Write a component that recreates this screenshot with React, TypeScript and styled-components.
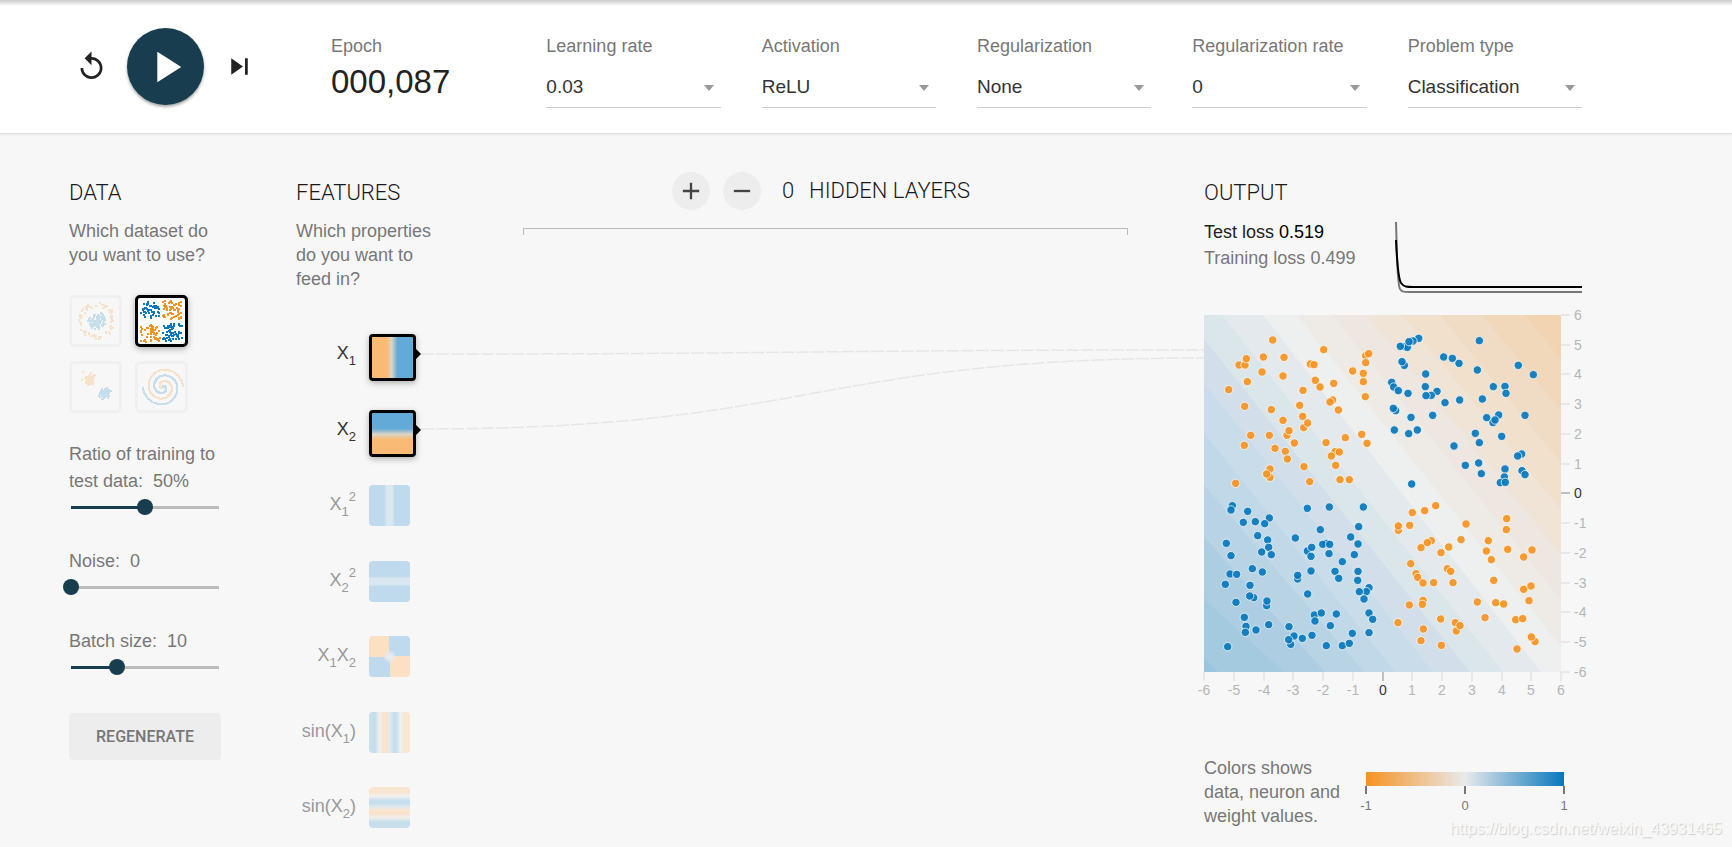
import React, { useState } from "react";
import styled, { createGlobalStyle, css } from "styled-components";

const ORANGE = "#f59322";
const BLUE = "#0877bd";
const DARK = "#183d4e";

const GlobalStyle = createGlobalStyle`
  *, *::before, *::after { box-sizing: border-box; }
  body {
    margin: 0;
    background: #f7f7f7;
    color: #777;
    font-family: "Liberation Sans", Arial, Helvetica, sans-serif;
    font-size: 18px;
    line-height: 24px;
  }
  button, select, input { font: inherit; margin: 0; }
`;

const Page = styled.div`
  position: relative;
  min-height: 100vh;
`;

/* ---------- top bar ---------- */

const TopBar = styled.header`
  display: flex;
  align-items: flex-start;
  padding: 28px 150px 25px 69px;
  border-bottom: 1px solid #dcdcdc;
  background: #fff linear-gradient(#c9c9c9, #fff) 0 0 / 100% 6px no-repeat;
  box-shadow: 0 1px 3px rgba(0, 0, 0, 0.06);
`;

const Controls = styled.div`
  display: flex;
  flex: none;
  align-items: center;
  gap: 19px;
  width: 262px;
  padding-left: 6px;
`;

const IconButton = styled.button`
  display: flex;
  width: 33px;
  height: 33px;
  padding: 0;
  border: 0;
  background: none;
  color: #222;
  cursor: pointer;
`;

const PlayButton = styled.button`
  display: flex;
  align-items: center;
  justify-content: center;
  width: 77px;
  height: 77px;
  padding: 0;
  border: 0;
  border-radius: 50%;
  background: ${DARK};
  color: #fff;
  box-shadow: 0 2px 3px rgba(0, 0, 0, 0.35);
  cursor: pointer;
`;

const Settings = styled.div`
  display: grid;
  flex: 1;
  grid-template-columns: repeat(6, minmax(0, 1fr));
  gap: 41px;
  padding-top: 6px;
`;

const Field = styled.div`
  display: flex;
  flex-direction: column;
  white-space: nowrap;
`;

const EpochValue = styled.output`
  margin-top: 5px;
  color: #222;
  font-size: 33px;
  line-height: 38px;
`;

const SelectBox = styled.div`
  position: relative;
  margin-top: 12px;

  &::after {
    content: "";
    position: absolute;
    top: 15px;
    right: 7px;
    border: 5px solid transparent;
    border-top: 6px solid #999;
    border-bottom: 0;
    pointer-events: none;
  }
`;

const Select = styled.select`
  display: block;
  width: 100%;
  height: 38px;
  padding: 0 20px 4px 0;
  border: 0;
  border-bottom: 1px solid #ccc;
  border-radius: 0;
  background: none;
  color: #333;
  font-size: 19px;
  appearance: none;
`;

/* ---------- page body ---------- */

const Main = styled.main`
  display: grid;
  grid-template-columns: 152px 140px minmax(0, 1fr) 378px;
  padding: 37px 150px 0 69px;
`;

const Column = styled.section<{ $indent?: boolean }>`
  margin-left: ${(p) => (p.$indent ? "75px" : "0")};
`;

const Title = styled.h2`
  margin: 9px 0 13px;
  color: #1a1a1a;
  font: 300 22px/26px Roboto, sans-serif;
`;

const Text = styled.p`
  margin: 0;
`;

const Datasets = styled.div`
  display: grid;
  grid-template-columns: 53px 53px;
  gap: 14px 13px;
  margin: 28px 0;
`;

const DatasetButton = styled.button<{ $active: boolean }>`
  height: 52px;
  padding: 0;
  border: 3px solid #d9d9d9;
  border-radius: 5px;
  background: #f7f7f7;
  opacity: 0.2;
  cursor: pointer;
  ${(p) =>
    p.$active &&
    css`
      border-color: #000;
      background: #fff;
      opacity: 1;
      box-shadow: 0 2px 6px rgba(0, 0, 0, 0.3);
    `}

  svg {
    display: block;
    width: 100%;
    height: 46px;
  }
`;

const SliderField = styled.div`
  margin-bottom: 33px;
  line-height: 27px;

  label { display: block; }
  output { margin-left: 5px; }
`;

const Slider = styled.input<{ $fill: number }>`
  display: block;
  width: calc(100% + 12px);
  height: 16px;
  margin: 4px 0 0 -6px;
  background: none;
  appearance: none;

  &::-webkit-slider-runnable-track {
    height: 16px;
    background: linear-gradient(
        to right,
        ${DARK} ${(p) => p.$fill}%,
        #bbb ${(p) => p.$fill}%
      )
      center / calc(100% - 16px) 3px no-repeat;
  }
  &::-webkit-slider-thumb {
    width: 16px;
    height: 16px;
    border: 0;
    border-radius: 50%;
    background: ${DARK};
    appearance: none;
  }
`;

const Regenerate = styled.button`
  width: 100%;
  height: 47px;
  margin-top: 5px;
  padding: 0;
  border: 0;
  border-radius: 4px;
  background: #ededed;
  color: #777;
  font: 500 16px/24px Roboto, sans-serif;
  cursor: pointer;
`;

/* ---------- features ---------- */

const FeatureColumn = styled(Column)`
  width: 140px;
`;

const FeatureList = styled.ul`
  display: flex;
  flex-direction: column;
  justify-content: space-between;
  height: 495px;
  margin: 43px 0 0;
  padding: 0;
  list-style: none;
`;

const Feature = styled.li<{ $active: boolean }>`
  display: grid;
  grid-template-columns: 60px auto;
  gap: 13px;
  height: 42px;
  color: ${(p) => (p.$active ? "#333" : "#999")};
`;

const FeatureName = styled.label`
  padding-top: 7px;
  text-align: right;
  white-space: nowrap;

  sub, sup {
    font-size: 13px;
    line-height: 0;
    vertical-align: -6px;
  }
  sup { vertical-align: 9px; }
`;

const FeatureButton = styled.button<{ $active: boolean; $paint: string }>`
  position: relative;
  width: 41px;
  height: 41px;
  padding: 0;
  border: 0;
  border-radius: 4px;
  background: ${(p) => p.$paint};
  cursor: pointer;
  ${(p) =>
    p.$active &&
    css`
      width: 47px;
      height: 47px;
      border: 3px solid #000;
      background-origin: padding-box;
      box-shadow: 0 2px 6px rgba(0, 0, 0, 0.3);

      &::after {
        content: "";
        position: absolute;
        top: 12px;
        left: 44px;
        border: 5px solid transparent;
        border-left-color: #000;
        border-right: 0;
      }
    `}
`;

/* ---------- network ---------- */

const Network = styled.section`
  margin-left: 75px;
`;

const LayerControls = styled.div`
  display: flex;
  align-items: center;
  justify-content: center;
  gap: 13px;
  height: 39px;
  margin: 0 76px 18px 87px;
  padding-right: 9px;
  color: #1a1a1a;
  font: 300 22px/26px Roboto, sans-serif;
  white-space: nowrap;
`;

const RoundButton = styled.button`
  display: flex;
  align-items: center;
  justify-content: center;
  width: 38px;
  height: 38px;
  padding: 0;
  border: 0;
  border-radius: 50%;
  background: #ededed;
  color: #444;
  cursor: pointer;
`;

const LayerCount = styled.span`
  margin: 0 2px 0 8px;
`;

const Bracket = styled.div`
  height: 7px;
  margin: 0 76px 0 87px;
  border: 1px solid #bbb;
  border-bottom: 0;
`;

const Links = styled.svg`
  display: block;
  width: calc(100% + 15px);
  height: 100px;
  margin: 105px 0 0 -15px;
  fill: none;
  stroke: #e6e6e4;

  path {
    stroke-width: 1.5px;
    stroke-dasharray: 13 2;
    vector-effect: non-scaling-stroke;
  }
`;

/* ---------- output ---------- */

const Metrics = styled.div`
  display: flex;
  justify-content: space-between;
  height: 96px;
  line-height: 26px;
`;

const TestLoss = styled.div`
  color: #222;

  output { color: #000; }
`;

const LossChart = styled.svg`
  width: 187px;
  height: 72px;
  margin-top: 3px;
  fill: none;
  stroke-width: 2;
`;

const HeatMap = styled.svg`
  display: block;
  width: 378px;
  height: 390px;
  overflow: visible;
  font-size: 14px;
`;

const Legend = styled.div`
  display: flex;
  gap: 22px;
  margin-top: 51px;
`;

const LegendText = styled.p`
  width: 140px;
  margin: 0;
`;

const Scale = styled.div`
  width: 198px;
  margin-top: 16px;
`;

const ScaleBar = styled.div`
  height: 14px;
  background: linear-gradient(to right, ${ORANGE}, #e8eaeb, ${BLUE});
`;

const ScaleTicks = styled.div`
  display: flex;
  justify-content: space-between;
  margin: 0 -10px;
`;

const ScaleTick = styled.span`
  display: flex;
  flex-direction: column;
  align-items: center;
  width: 20px;
  font-size: 13px;
  line-height: 24px;

  &::before {
    content: "";
    width: 2px;
    height: 8px;
    background: #777;
  }
`;

const Watermark = styled.div`
  position: absolute;
  right: 10px;
  bottom: 6px;
  color: #f9f9f9;
  font-size: 16px;
  text-shadow: 1px 1px 1px #ccc;
`;

/* ---------- data ---------- */

type Point = [number, number];
type Cloud = { color: string; points: Point[] };

const makeRandom = (seed: number) => () => {
  seed = (seed * 16807) % 2147483647;
  return seed / 2147483647;
};

const times = (n: number, make: (i: number) => Point): Point[] =>
  Array.from({ length: n }, (_, i) => make(i));

const ringCloud = (seed: number, n: number, from: number, to: number) => {
  const random = makeRandom(seed);
  return times(n, () => {
    const angle = random() * Math.PI * 2;
    const radius = from + random() * (to - from);
    return [24 + radius * Math.cos(angle), 22 + radius * Math.sin(angle)];
  });
};

const boxCloud = (seed: number, n: number, x: number, y: number) => {
  const random = makeRandom(seed);
  return times(n, () => [x + random() * 19, y + random() * 18]);
};

const gaussCloud = (seed: number, n: number, x: number, y: number) => {
  const random = makeRandom(seed);
  const spread = () => (random() + random() + random() - 1.5) * 5;
  return times(n, () => [x + spread(), y + spread()]);
};

const spiralCloud = (turn: number) =>
  times(150, (i) => {
    const t = i / 150;
    const angle = turn - Math.PI * 3.5 * (1 - t);
    const radius = 20 * t;
    return [24 + radius * Math.cos(angle), 22 + radius * Math.sin(angle)];
  });

const DATASETS: { name: string; clouds: Cloud[] }[] = [
  {
    name: "Circle",
    clouds: [
      { color: ORANGE, points: ringCloud(71, 85, 14, 19) },
      { color: BLUE, points: ringCloud(19, 110, 0, 9) },
    ],
  },
  {
    name: "Exclusive or",
    clouds: [
      { color: BLUE, points: [...boxCloud(5, 44, 2, 2), ...boxCloud(911, 60, 24, 25)] },
      { color: ORANGE, points: [...boxCloud(303, 60, 24, 2), ...boxCloud(47, 50, 2, 25)] },
    ],
  },
  {
    name: "Gaussian",
    clouds: [
      { color: ORANGE, points: gaussCloud(11, 100, 16, 14) },
      { color: BLUE, points: gaussCloud(83, 100, 31, 29) },
    ],
  },
  {
    name: "Spiral",
    clouds: [
      { color: ORANGE, points: spiralCloud(0) },
      { color: BLUE, points: spiralCloud(Math.PI) },
    ],
  },
];

const SETTINGS = [
  { label: "Learning rate", options: ["0.03", "0.1", "0.3", "1"] },
  { label: "Activation", options: ["ReLU", "Tanh", "Sigmoid", "Linear"] },
  { label: "Regularization", options: ["None", "L1", "L2"] },
  { label: "Regularization rate", options: ["0", "0.001", "0.01", "0.1"] },
  { label: "Problem type", options: ["Classification", "Regression"] },
];

const SLIDERS = [
  { id: "ratio", label: "Ratio of training to test data:", min: 10, max: 90, value: 50, unit: "%" },
  { id: "noise", label: "Noise:", min: 0, max: 50, value: 0, unit: "" },
  { id: "batch", label: "Batch size:", min: 1, max: 30, value: 10, unit: "" },
];

const STEP = "#f8ba75 36%, #ddd6c6 48%, #63aad8 62%";
const BAND = "#bfdaec 37%, #d8e7f0 43%, #d8e7f0 57%, #bfdaec 63%";
const WAVE =
  "#c9dfec 0, #c5deec 15%, #f1efec 25%, #fae2c8 36%, #f7e6d3 44%, #dfe9ee 52%, #c1ddec 62%, #c9e0ec 68%, #f1f1f0 77%, #f9e6d0 87%";

const FEATURES = [
  { id: "x", name: <>X<sub>1</sub></>, active: true, paint: `linear-gradient(to right, ${STEP})` },
  { id: "y", name: <>X<sub>2</sub></>, active: true, paint: `linear-gradient(to top, ${STEP})` },
  { id: "x2", name: <>X<sub>1</sub><sup>2</sup></>, active: false, paint: `linear-gradient(to right, ${BAND})` },
  { id: "y2", name: <>X<sub>2</sub><sup>2</sup></>, active: false, paint: `linear-gradient(to top, ${BAND})` },
  {
    id: "xy",
    name: <>X<sub>1</sub>X<sub>2</sub></>,
    active: false,
    paint:
      "radial-gradient(circle, #e6ebee 2px, transparent 7px), conic-gradient(#bfdaec 25%, #fbe0c3 0 50%, #bfdaec 0 75%, #fbe0c3 0)",
  },
  { id: "sinx", name: <>sin(X<sub>1</sub>)</>, active: false, paint: `linear-gradient(to right, ${WAVE})` },
  { id: "siny", name: <>sin(X<sub>2</sub>)</>, active: false, paint: `linear-gradient(to top, ${WAVE})` },
];

/* Bands of the decision surface: each covers what lies above and right of its edge. */
const BANDS: { color: string; from: Point; to: Point }[] = [
  { color: "#a4cae0", from: [0, 343], to: [14, 357] },
  { color: "#adcee2", from: [0, 284], to: [80, 357] },
  { color: "#b7d3e4", from: [0, 222], to: [121, 357] },
  { color: "#c0d8e7", from: [0, 170], to: [160, 357] },
  { color: "#c9dce9", from: [0, 118], to: [191, 357] },
  { color: "#d2dfea", from: [0, 68], to: [229, 357] },
  { color: "#dbe6eb", from: [0, 24], to: [266, 357] },
  { color: "#e4e9ed", from: [18, 0], to: [299, 357] },
  { color: "#edf0ef", from: [59, 0], to: [337, 357] },
  { color: "#eeebe7", from: [93, 0], to: [357, 332] },
  { color: "#eee6e1", from: [128, 0], to: [357, 285] },
  { color: "#f0e4d7", from: [163, 0], to: [357, 240] },
  { color: "#f0e0cc", from: [198, 0], to: [357, 195] },
  { color: "#f0dcc4", from: [236, 0], to: [357, 148] },
  { color: "#f1d8bb", from: [278, 0], to: [357, 96] },
  { color: "#f2d4b3", from: [321, 0], to: [357, 44] },
];

/* Sample points per quadrant, in thirds of a pixel. */
const QUADRANTS: { color: string; x: number; y: number; points: Point[] }[] = [
  {
    color: ORANGE, x: -27, y: -30,
    points: [
      [233, 105], [386, 134], [205, 156], [267, 157], [132, 180], [150, 180], [154, 161], [201, 201], [264, 213],
      [157, 230], [101, 254], [346, 177], [357, 179], [361, 226], [375, 246], [416, 235], [324, 256], [512, 152],
      [521, 146], [512, 173], [473, 198], [505, 205], [505, 230], [511, 275], [149, 304], [229, 314], [314, 301],
      [413, 285], [405, 291], [430, 315], [323, 334], [264, 346], [326, 368], [338, 354], [276, 391], [282, 377],
      [167, 391], [223, 391], [148, 421], [240, 430], [298, 414], [271, 439], [277, 462], [393, 413], [451, 398],
      [500, 388], [516, 415], [420, 440], [433, 441], [409, 453], [422, 481], [327, 485], [225, 492], [225, 517],
      [215, 507], [122, 535], [344, 530], [435, 524], [463, 524],
    ],
  },
  {
    color: BLUE, x: 513, y: -30,
    points: [
      [131, 100], [114, 108], [90, 125], [97, 127], [102, 110], [76, 124], [313, 107], [88, 181], [81, 170],
      [206, 156], [232, 160], [252, 175], [152, 207], [307, 195], [430, 181], [475, 209], [50, 232], [56, 246],
      [70, 257], [99, 265], [151, 245], [186, 259], [169, 271], [153, 272], [210, 293], [254, 285], [322, 282],
      [355, 245], [390, 244], [393, 265], [62, 317], [55, 310], [108, 337], [173, 331], [335, 338], [371, 330],
      [354, 353], [360, 345], [450, 331], [58, 375], [101, 386], [127, 375], [301, 385], [380, 394], [313, 413],
      [237, 423], [440, 447], [428, 453], [271, 481], [311, 474], [319, 506], [390, 492], [441, 497], [450, 509],
      [388, 516], [376, 533], [391, 532], [110, 537],
    ],
  },
  {
    color: BLUE, x: -27, y: 525,
    points: [
      [112, 47], [108, 60], [158, 64], [337, 55], [403, 51], [505, 51], [145, 97], [181, 95], [223, 84], [209, 101],
      [491, 110], [376, 119], [188, 137], [218, 150], [301, 144], [467, 141], [94, 160], [221, 172], [200, 186],
      [229, 194], [108, 197], [393, 160], [383, 163], [404, 163], [489, 162], [337, 183], [350, 172], [348, 199],
      [402, 191], [478, 194], [442, 215], [172, 236], [202, 246], [105, 252], [125, 253], [348, 243], [420, 244],
      [489, 244], [431, 265], [488, 271], [308, 267], [308, 256], [91, 283], [165, 286], [522, 293], [514, 305],
      [493, 305], [338, 312], [507, 327], [176, 323], [164, 318], [123, 337], [215, 347], [216, 333], [148, 382],
      [153, 409], [151, 427], [183, 420], [221, 404], [358, 375], [379, 369], [424, 372], [360, 393], [406, 407],
      [522, 369], [533, 388], [282, 410], [522, 428], [472, 430], [351, 436], [322, 445], [297, 438], [287, 463],
      [281, 449], [98, 470], [394, 467], [442, 467], [463, 460],
    ],
  },
  {
    color: ORANGE, x: 513, y: 525,
    points: [
      [182, 47], [149, 62], [112, 68], [70, 121], [70, 108], [104, 106], [273, 102], [395, 86], [394, 119],
      [340, 152], [258, 149], [169, 152], [157, 158], [138, 173], [221, 171], [198, 188], [334, 183], [398, 178],
      [471, 180], [446, 201], [349, 209], [107, 221], [217, 236], [227, 244], [123, 251], [128, 262], [144, 279],
      [176, 278], [234, 278], [356, 271], [446, 298], [468, 288], [144, 331], [142, 343], [103, 345], [307, 336],
      [362, 338], [386, 342], [462, 332], [330, 383], [422, 389], [443, 386], [69, 398], [145, 417], [197, 387],
      [241, 398], [244, 423], [255, 407], [138, 452], [199, 466], [426, 477], [480, 455], [469, 441],
    ],
  },
];

const AXIS = Array.from({ length: 13 }, (_, i) => i - 6);
const axisPosition = (value: number) => Math.round(((value + 6) * 357) / 12);

/* ---------- parts ---------- */

const Icon = ({ d, size }: { d: string; size: number }) => (
  <svg width={size} height={size} viewBox="0 0 24 24" fill="currentColor" aria-hidden="true">
    <path d={d} />
  </svg>
);

const DatasetThumb = ({ clouds }: { clouds: Cloud[] }) => (
  <svg viewBox="0 0 47 46" aria-hidden="true">
    {clouds.map((cloud) => (
      <path
        key={cloud.color}
        fill={cloud.color}
        shapeRendering="crispEdges"
        d={cloud.points.map(([x, y]) => `M${Math.round(x)} ${Math.round(y)}h2v2h-2z`).join("")}
      />
    ))}
  </svg>
);

const SliderRow = ({ id, label, min, max, value, unit }: (typeof SLIDERS)[number]) => {
  const [current, setCurrent] = useState(value);
  return (
    <SliderField>
      <label htmlFor={id}>
        {label} <output>{`${current}${unit}`}</output>
      </label>
      <Slider
        id={id}
        type="range"
        min={min}
        max={max}
        value={current}
        $fill={((current - min) / (max - min)) * 100}
        onChange={(e) => setCurrent(Number(e.target.value))}
      />
    </SliderField>
  );
};

const DecisionSurface = () => (
  <HeatMap viewBox="0 0 378 390" role="img" aria-label="Decision surface">
    <rect width="357" height="357" fill="#99c5de" />
    {BANDS.map(({ color, from, to }) => (
      <path
        key={color}
        fill={color}
        d={`M${from} L${to} ${to[0] < 357 ? "L357 357" : ""} L357 0 ${from[0] > 0 ? "" : "L0 0"}z`}
      />
    ))}
    {QUADRANTS.map(({ color, x, y, points }) => (
      <g
        key={`${x},${y}`}
        transform={`scale(${1 / 3}) translate(${x} ${y})`}
        fill={color}
        fillOpacity="0.92"
        stroke="#fff"
        strokeOpacity="0.75"
        strokeWidth="3"
      >
        {points.map(([cx, cy]) => (
          <circle key={`${cx},${cy}`} cx={cx} cy={cy} r="12.5" />
        ))}
      </g>
    ))}
    {AXIS.map((value) => {
      const at = axisPosition(value);
      const line = value === 0 ? "#888" : "#d9d9d9";
      const text = value === 0 ? "#333" : "#b5b5b5";
      return (
        <g key={value}>
          <path d={`M${at} 357v9M357 ${357 - at}h9`} stroke={line} />
          <text x={at} y="380" textAnchor="middle" fill={text}>{value}</text>
          <text x="370" y={362 - at} fill={text}>{value}</text>
        </g>
      );
    })}
  </HeatMap>
);

export default function App() {
  const [dataset, setDataset] = useState("Exclusive or");

  return (
    <Page>
      <GlobalStyle />
      <TopBar>
        <Controls>
          <IconButton aria-label="Reset">
            <Icon
              size={33}
              d="M12 5V1L7 6l5 5V7c3.31 0 6 2.69 6 6s-2.69 6-6 6-6-2.69-6-6H4c0 4.42 3.58 8 8 8s8-3.58 8-8-3.58-8-8-8z"
            />
          </IconButton>
          <PlayButton aria-label="Run">
            <Icon size={52} d="M8 5v14l11-7z" />
          </PlayButton>
          <IconButton aria-label="Step">
            <Icon size={33} d="M6 18l8.500-6L6 6v12zM16 6v12h2V6h-2z" />
          </IconButton>
        </Controls>
        <Settings>
          <Field>
            <label htmlFor="epoch">Epoch</label>
            <EpochValue id="epoch">000,087</EpochValue>
          </Field>
          {SETTINGS.map(({ label, options }) => (
            <Field key={label}>
              <label htmlFor={label}>{label}</label>
              <SelectBox>
                <Select id={label}>
                  {options.map((option) => (
                    <option key={option}>{option}</option>
                  ))}
                </Select>
              </SelectBox>
            </Field>
          ))}
        </Settings>
      </TopBar>

      <Main>
        <Column>
          <Title>DATA</Title>
          <Text>Which dataset do you want to use?</Text>
          <Datasets>
            {DATASETS.map(({ name, clouds }) => (
              <DatasetButton
                key={name}
                aria-label={name}
                $active={name === dataset}
                onClick={() => setDataset(name)}
              >
                <DatasetThumb clouds={clouds} />
              </DatasetButton>
            ))}
          </Datasets>
          {SLIDERS.map((slider) => (
            <SliderRow key={slider.id} {...slider} />
          ))}
          <Regenerate>REGENERATE</Regenerate>
        </Column>

        <FeatureColumn $indent>
          <Title>FEATURES</Title>
          <Text>Which properties do you want to feed in?</Text>
          <FeatureList>
            {FEATURES.map(({ id, name, active, paint }) => (
              <Feature key={id} $active={active}>
                <FeatureName htmlFor={id}>{name}</FeatureName>
                <FeatureButton id={id} $active={active} $paint={paint} />
              </Feature>
            ))}
          </FeatureList>
        </FeatureColumn>

        <Network>
          <LayerControls>
            <RoundButton aria-label="Add layer">
              <Icon size={28} d="M19 13h-6v6h-2v-6H5v-2h6V5h2v6h6v2z" />
            </RoundButton>
            <RoundButton aria-label="Remove layer">
              <Icon size={28} d="M19 13H5v-2h14v2z" />
            </RoundButton>
            <LayerCount>0</LayerCount>
            <span>HIDDEN LAYERS</span>
          </LayerControls>
          <Bracket />
          <Links viewBox="0 0 783 100" preserveAspectRatio="none" aria-hidden="true">
            <path d="M0 14C391 14 391 10 783 10" />
            <path d="M0 89C391 89 391 18 783 18" />
          </Links>
        </Network>

        <Column>
          <Title>OUTPUT</Title>
          <Metrics>
            <div>
              <TestLoss>Test loss <output>0.519</output></TestLoss>
              <div>Training loss <output>0.499</output></div>
            </div>
            <LossChart viewBox="0 0 187 72" role="img" aria-label="Loss over time">
              <path stroke="#777" d="M1 0C2 30 2 62 5 67C7 70 9 70 14 70H187" />
              <path stroke="#000" d="M1 18C2 40 3 56 6 61C9 65 12 65 18 65H187" />
            </LossChart>
          </Metrics>
          <DecisionSurface />
          <Legend>
            <LegendText>Colors shows data, neuron and weight values.</LegendText>
            <Scale>
              <ScaleBar />
              <ScaleTicks>
                <ScaleTick>-1</ScaleTick>
                <ScaleTick>0</ScaleTick>
                <ScaleTick>1</ScaleTick>
              </ScaleTicks>
            </Scale>
          </Legend>
        </Column>
      </Main>
      <Watermark>https://blog.csdn.net/weixin_43931465</Watermark>
    </Page>
  );
}
